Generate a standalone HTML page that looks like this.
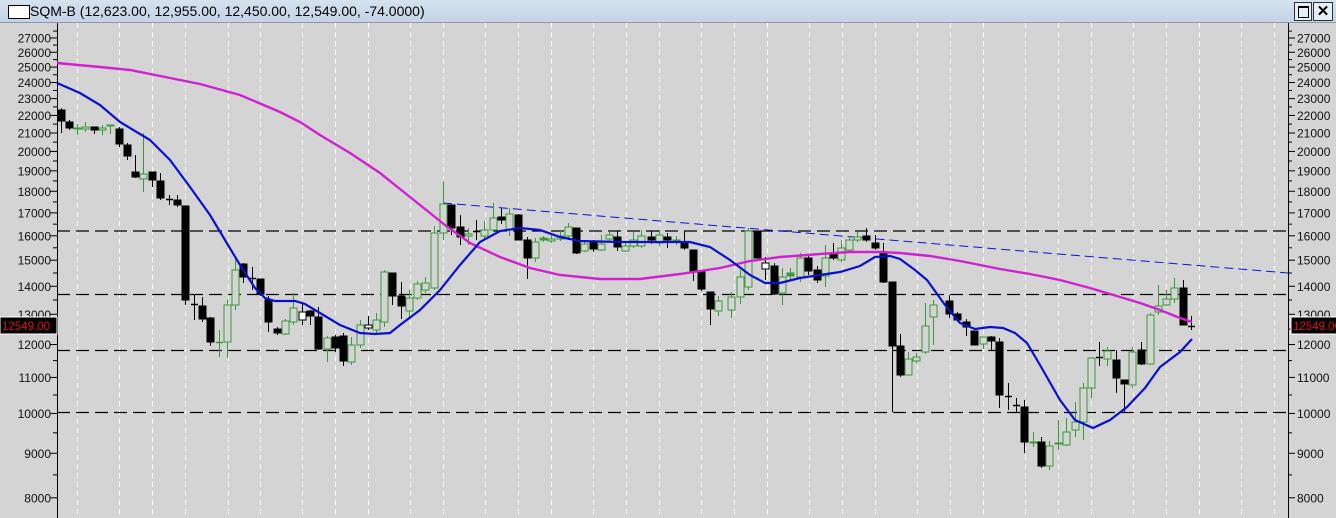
<!DOCTYPE html>
<html><head><meta charset="utf-8"><style>
html,body{margin:0;padding:0;width:1336px;height:518px;overflow:hidden;background:#d4d4d4;font-family:"Liberation Sans",Arial,sans-serif}
#t{position:absolute;left:0;top:0;width:1336px;height:22px;background:linear-gradient(#d5e2ef,#c3d4e6);border-bottom:1px solid #8a9aaa}
#t span{position:absolute;left:30px;top:3px;font-size:14px;color:#000}
</style></head><body>
<div id="t">
<div style="position:absolute;left:8px;top:5px;width:20px;height:12px;border:1px solid #000;background:#fff"></div>
<span>SQM-B (12,623.00, 12,955.00, 12,450.00, 12,549.00, -74.0000)</span>
<div style="position:absolute;left:1294px;top:2px;width:16px;height:17px;border:1px solid #333;background:#e6eef6"><div style="position:absolute;left:3px;top:3px;width:9px;height:9px;border:1px solid #000;border-top-width:2px"></div></div>
<div style="position:absolute;left:1313px;top:2px;width:18px;height:17px;border:1px solid #333;background:#e6eef6;font-size:15px;font-weight:bold;text-align:center;line-height:17px">✕</div>
</div>
<svg id="s" width="1336" height="518" style="position:absolute;left:0;top:0" xmlns="http://www.w3.org/2000/svg">
<rect x="0" y="23" width="1336" height="495" fill="#d4d4d4"/>
<g id="grid"></g>
<g stroke="#000" stroke-width="1.2" stroke-dasharray="13,6" fill="none">
<line x1="57" y1="231" x2="1288" y2="231"/><line x1="57" y1="294.5" x2="1288" y2="294.5"/>
<line x1="57" y1="350.5" x2="1288" y2="350.5"/><line x1="57" y1="412.5" x2="1288" y2="412.5"/>
</g>
<line x1="443" y1="203" x2="1288" y2="273" stroke="#1010e0" stroke-width="1" stroke-dasharray="9,5"/>
<line x1="57.5" y1="23" x2="57.5" y2="518" stroke="#000"/>
<line x1="1288.5" y1="23" x2="1288.5" y2="518" stroke="#000"/>
<g id="ax" font-size="12" fill="#111"></g>
<g id="cd"></g>
<polyline fill="none" stroke="#d020d0" stroke-width="2.4" points="57,63 100,67 130,70 170,78 200,84 240,95 280,112 300,122 320,135 350,153 380,173 410,197 430,213 445,225 470,243 500,257 530,268 560,275 600,279 640,279 680,274 720,268 750,261 780,257 820,254 850,252 880,252 900,253 930,256 960,261 1000,269 1030,274 1060,280 1090,288 1120,297 1140,303 1160,310 1180,318 1192,322"/>
<polyline fill="none" stroke="#0a10d0" stroke-width="2.2" points="57,83 80,93 100,105 120,122 150,140 170,160 190,187 210,215 225,240 240,265 255,288 265,298 275,301 295,301 305,304 320,313 340,325 360,333 375,334 390,333 400,325 420,310 440,290 460,265 480,242 500,231 520,228 540,230 560,237 580,241 620,242 660,242 690,242 710,247 730,260 750,275 765,283 780,283 800,278 820,275 840,272 860,266 875,257 890,256 900,259 915,270 927,280 945,305 960,323 975,329 990,327 1003,328 1015,333 1027,343 1040,365 1060,400 1075,420 1093,428 1110,420 1127,407 1145,388 1160,367 1180,352 1192,339"/>
<rect x="0" y="317" width="57" height="17" fill="#000" stroke="#fff"/>
<text x="2" y="330" font-size="11.5" fill="#e01010">12549.00</text>
<rect x="1291" y="317" width="46" height="17" fill="#000" stroke="#fff"/>
<text x="1293" y="330" font-size="11.5" fill="#e01010">12549.00</text>
</svg>
<script>
var NS="http://www.w3.org/2000/svg",s=document.getElementById('s');
function el(p,t,a){var e=document.createElementNS(NS,t);for(var k in a)e.setAttribute(k,a[k]);p.appendChild(e);return e;}
var g=document.getElementById('grid');
var gx=[77,119,152,185,228,260,302,335,368,410,443];
var x=443,i=0;while(x<1230){x+=[42,33,33][i%3];i++;gx.push(x);}
gx.push(1274);
gx.forEach(function(v){el(g,'line',{x1:v+.5,y1:23,x2:v+.5,y2:518,stroke:'#fff','stroke-dasharray':'5,4'});});
var ax=document.getElementById('ax');
function Y(p){return 38+(Math.log(27000)-Math.log(p))*378;}
for(var p=8000;p<=27000;p+=1000){var y=Y(p);
 el(ax,'line',{x1:50,y1:y,x2:57,y2:y,stroke:'#000'});el(ax,'line',{x1:1288,y1:y,x2:1295,y2:y,stroke:'#000'});
 var t=el(ax,'text',{x:51,y:y+4.5,'text-anchor':'end'});t.textContent=p;
 var t2=el(ax,'text',{x:1297,y:y+4.5});t2.textContent=p;
 var y2=Y(p+500);el(ax,'line',{x1:53,y1:y2,x2:57,y2:y2,stroke:'#000'});el(ax,'line',{x1:1288,y1:y2,x2:1292,y2:y2,stroke:'#000'});}
var C=[[61,110,121,108,133,'b'],[69,122,128,120,130,'b'],[77,128,129,124,135,'g'],[85,127,129,122,132,'g'],[94,127,130,127,134,'b'],[102,128,130,125,135,'g'],[110,125,126,125,134,'g'],[119,129,144,127,147,'b'],[127,145,156,143,160,'b'],[135,172,177,155,178,'b'],[143,174,179,133,192,'g'],[152,172,180,172,187,'b'],[160,181,198,173,200,'b'],[169,199,199,195,205,'b'],[177,200,205,195,207,'b'],[185,206,300,205,305,'b'],[194,304,304,295,320,'b'],[202,306,319,297,322,'b'],[210,318,342,317,346,'b'],[219,342,342,330,357,'g'],[227,305,342,300,358,'g'],[235,270,305,260,310,'g'],[243,264,277,263,283,'b'],[252,278,278,267,290,'b'],[260,279,294,279,296,'b'],[268,300,322,296,332,'b'],[277,329,333,327,335,'b'],[285,321,334,319,335,'g'],[293,308,322,293,325,'g'],[302,312,320,302,325,'w'],[310,311,316,310,325,'b'],[318,317,349,307,350,'b'],[327,338,349,336,362,'g'],[335,337,348,335,352,'b'],[343,336,361,333,366,'b'],[351,345,362,337,365,'g'],[360,325,345,320,348,'g'],[368,325,328,316,330,'w'],[376,320,330,313,333,'g'],[384,272,322,270,327,'g'],[392,273,296,273,305,'b'],[401,296,306,282,319,'b'],[409,298,311,290,318,'g'],[417,284,298,281,300,'g'],[425,283,290,277,293,'g'],[434,233,288,226,290,'g'],[443,204,233,181,240,'g'],[451,205,228,205,235,'b'],[460,227,237,215,245,'b'],[468,234,236,228,245,'g'],[476,231,231,220,240,'b'],[484,230,236,221,240,'g'],[493,218,230,203,232,'g'],[501,217,220,208,224,'b'],[509,214,230,208,236,'g'],[518,215,240,214,240,'b'],[527,240,258,237,279,'b'],[535,242,258,238,262,'g'],[543,238,240,236,242,'G'],[551,239,241,235,243,'g'],[560,236,239,231,241,'g'],[568,227,236,223,240,'g'],[576,228,253,228,254,'b'],[584,244,251,240,252,'g'],[593,241,249,240,252,'b'],[601,244,250,235,251,'g'],[609,235,239,231,241,'g'],[617,237,247,231,251,'b'],[625,246,251,241,252,'g'],[633,240,246,232,248,'g'],[641,236,246,230,248,'g'],[651,237,240,231,244,'b'],[659,235,243,230,246,'g'],[667,237,240,233,248,'b'],[676,240,242,236,245,'G'],[684,242,248,231,250,'b'],[693,250,271,250,281,'b'],[701,272,289,272,291,'b'],[710,292,309,292,325,'b'],[718,301,311,296,316,'g'],[731,297,310,292,318,'g'],[740,277,297,270,304,'g'],[748,231,287,228,290,'g'],[757,231,258,231,258,'b'],[765,263,269,257,280,'w'],[774,266,294,263,295,'b'],[782,277,293,268,305,'g'],[790,273,276,268,280,'G'],[800,258,277,253,282,'g'],[808,258,271,255,275,'b'],[817,270,280,266,283,'b'],[825,258,276,245,287,'g'],[833,254,258,243,260,'b'],[841,248,260,240,262,'g'],[849,240,250,236,252,'g'],[857,237,240,232,242,'g'],[866,236,240,228,242,'b'],[875,243,248,235,250,'b'],[883,253,282,243,283,'b'],[892,282,346,282,412,'b'],[900,346,375,334,377,'b'],[908,359,375,352,375,'g'],[916,357,361,353,363,'g'],[925,326,352,303,354,'g'],[933,305,317,300,345,'g'],[949,301,314,295,318,'b'],[957,314,320,312,322,'b'],[966,322,327,319,336,'b'],[974,331,345,331,345,'b'],[983,337,344,338,349,'g'],[991,337,341,336,350,'b'],[999,342,395,338,408,'b'],[1008,396,396,383,410,'b'],[1016,405,405,398,412,'b'],[1024,407,442,400,453,'b'],[1033,442,443,432,447,'g'],[1041,442,466,437,468,'b'],[1049,446,466,441,470,'g'],[1058,443,444,420,450,'g'],[1066,432,445,418,446,'g'],[1075,422,430,402,437,'g'],[1083,388,422,383,440,'g'],[1091,358,388,357,398,'g'],[1099,357,357,342,366,'b'],[1107,351,359,347,366,'g'],[1116,360,378,350,393,'b'],[1124,380,384,380,412,'b'],[1132,352,385,347,388,'g'],[1141,350,364,342,365,'b'],[1150,315,364,313,365,'g'],[1158,306,312,285,315,'g'],[1166,299,305,290,306,'g'],[1174,288,299,278,303,'g'],[1183,288,325,280,325,'b'],[1191,326,326,316,330,'b']];
var cd=document.getElementById('cd');
C.forEach(function(c){var x=c[0]+.5,t=c[5];var col=(t=='b'||t=='w')?'#000':'#3a9a3a';
 el(cd,'line',{x1:x,y1:c[3],x2:x,y2:c[4],stroke:col});
 var h=c[2]-c[1];
 if(h<1){el(cd,'line',{x1:x-3.5,y1:c[1]+.5,x2:x+3.5,y2:c[1]+.5,stroke:col,'stroke-width':1.5});}
 else{var f=t=='b'?'#000':(t=='G'?'#3a9a3a':(t=='w'?'#fff':'#d4d4d4'));
 el(cd,'rect',{x:x-3.5,y:c[1],width:7,height:h,fill:f,stroke:col});}
});
</script>
</body></html>
